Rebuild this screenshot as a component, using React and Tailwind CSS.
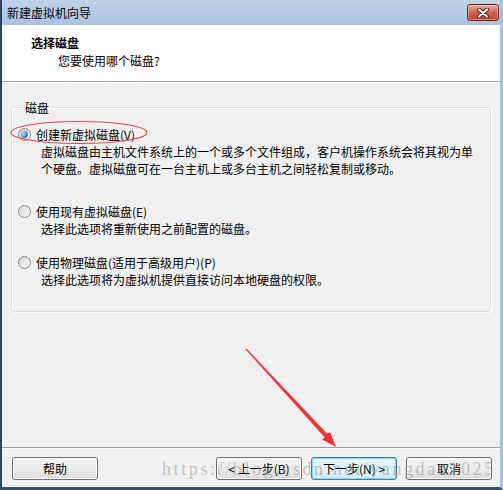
import React from "react";

const cjk = "font-['Noto_Sans_CJK_SC','Noto_Sans',sans-serif]";

function Radio({ checked }) {
  return (
    <span className="w-[13px] h-[13px] shrink-0 rounded-full border border-[#8a8a8a] bg-linear-to-br from-[#d4d4d4] to-[#fbfbfb] flex items-center justify-center">
      {checked && (
        <span className="w-[7px] h-[7px] rounded-full bg-[radial-gradient(circle_at_35%_35%,#b6e4fb_0%,#3a8ad6_55%,#16498c_100%)]" />
      )}
    </span>
  );
}

function Option({ checked, label, lines, className = "" }) {
  return (
    <div className={className}>
      <div className="flex items-center gap-[5px] h-[17px]">
        <Radio checked={checked} />
        <span>{label}</span>
      </div>
      <div className="pl-[23px] whitespace-nowrap">
        {lines.map((l) => (
          <div key={l} className="h-[17px]">
            {l}
          </div>
        ))}
      </div>
    </div>
  );
}

function Btn({ children, primary }) {
  return (
    <button
      className={`w-[86px] h-[23px] rounded-[3px] border text-[12px] text-black flex items-center justify-center ${
        primary
          ? "border-[#3c7fb1] bg-linear-to-b from-[#eaf6fd] to-[#d3ebf9] shadow-[inset_0_0_0_1px_#8fd0f5]"
          : "border-[#707070] bg-linear-to-b from-[#f3f3f3] via-[#ebebeb] to-[#dcdcdc] shadow-[inset_0_0_0_1px_#fcfcfc]"
      }`}
    >
      {children}
    </button>
  );
}

export default function App() {
  return (
    <div
      className={`relative w-[503px] h-[490px] flex flex-col bg-[#f0f0f0] border-l-2 border-l-[#2b4565] border-r-[3px] border-r-[#a3c3e4] border-b-[3px] border-b-[#34506f] text-[12px] leading-[17px] text-black overflow-hidden ${cjk}`}
    >
      {/* title bar */}
      <div className="h-[25px] flex items-center justify-between pl-[5px] pr-[1px] bg-linear-to-b from-[#bed3e9] to-[#aac3df]">
        <span className="text-[12px]">新建虚拟机向导</span>
        <span className="w-[32px] h-[17px] rounded-[3px] border border-[#6e2a20] bg-linear-to-b from-[#e9a697] via-[#d3644f] to-[#c1432f] flex items-center justify-center shadow-[inset_0_0_0_1px_rgba(255,255,255,0.35)]">
          <svg width="12" height="10" viewBox="0 0 12 10">
            <path d="M2 1.5 L10 8.5 M10 1.5 L2 8.5" stroke="#4a1d16" strokeWidth="4" strokeLinecap="round" />
            <path d="M2 1.5 L10 8.5 M10 1.5 L2 8.5" stroke="#ffffff" strokeWidth="2.2" strokeLinecap="round" />
          </svg>
        </span>
      </div>

      {/* header */}
      <div className="h-[56px] bg-white pl-[29px] pt-[9px]">
        <div className="font-bold">选择磁盘</div>
        <div className="pl-[27px] mt-[1px]">您要使用哪个磁盘?</div>
      </div>
      <div className="h-[2px] border-t border-t-[#a0a0a0] border-b border-b-white" />

      {/* body */}
      <div className="h-[364px] px-[9px] pt-[16px]">
        <fieldset className="border border-[#d5dfe5] rounded-[3px] shadow-[inset_1px_1px_0_#ffffff,1px_1px_0_#ffffff] pl-[6px] pt-[10px] pb-[23px]">
          <legend className="ml-[5px] px-[2px] leading-[17px]">磁盘</legend>
          <Option
            checked
            label="创建新虚拟磁盘(V)"
            lines={[
              "虚拟磁盘由主机文件系统上的一个或多个文件组成，客户机操作系统会将其视为单",
              "个硬盘。虚拟磁盘可在一台主机上或多台主机之间轻松复制或移动。",
            ]}
          />
          <Option
            className="mt-[26px]"
            label="使用现有虚拟磁盘(E)"
            lines={["选择此选项将重新使用之前配置的磁盘。"]}
          />
          <Option
            className="mt-[17px]"
            label="使用物理磁盘(适用于高级用户)(P)"
            lines={["选择此选项将为虚拟机提供直接访问本地硬盘的权限。"]}
          />
        </fieldset>
      </div>
      <div className="h-[2px] border-t border-t-[#a0a0a0] border-b border-b-white" />

      {/* footer */}
      <div className="h-[38px] flex items-start justify-between pl-[10px] pr-[8px] pt-[8px]">
        <Btn>帮助</Btn>
        <div className="flex gap-[9px]">
          <Btn>&lt; 上一步(B)</Btn>
          <Btn primary>下一步(N) &gt;</Btn>
          <Btn>取消</Btn>
        </div>
      </div>

      {/* watermark */}
      <div className="absolute left-[160px] top-[459px] font-['Liberation_Serif',serif] text-[18px] leading-[20px] tracking-[2.6px] text-[rgba(150,150,150,0.55)] pointer-events-none whitespace-nowrap">
        https://blog.csdn.net/yangdan1025
      </div>

      {/* annotations */}
      <svg
        className="absolute left-[-2px] top-0 pointer-events-none"
        width="503"
        height="490"
        viewBox="0 0 503 490"
      >
        <ellipse cx="79" cy="132.5" rx="68" ry="11" fill="none" stroke="#e5484a" strokeWidth="1.2" />
        <polygon
          points="245.6,349.4 246.4,348.6 327.0,433.6 330.2,432.4 336,447 322.0,439.6 324.8,437.6"
          fill="#f43434"
        />
      </svg>
    </div>
  );
}
